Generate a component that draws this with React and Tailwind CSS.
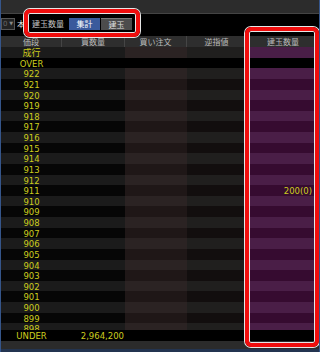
import React from "react";

const cjk = "font-['Noto_Sans_CJK_JP',sans-serif]";
const num = "font-['DejaVu_Sans',sans-serif]";

const prices = Array.from({ length: 25 }, (_, i) => String(922 - i));

const bands = {
    light: ["bg-[#1b1b1b]", "bg-[#1b1b1b]", "bg-[#2b2323]", "bg-[#201f1e]", "bg-[#4a1e47]"],
    dark: ["bg-[#060606]", "bg-[#060606]", "bg-[#1f1717]", "bg-[#120e0e]", "bg-[#360b30]"],
    black: ["bg-black", "bg-black", "bg-black", "bg-black", "bg-black"],
};

const rows = [
    { price: "成行", band: "light", jp: true },
    { price: "OVER", band: "black" },
    ...prices.map((p, i) => ({
        price: p,
        band: i % 2 === 0 ? "light" : "dark",
        pos: p === "911" ? "200(0)" : "",
    })),
];

const cols = "grid grid-cols-[61px_63px_62px_60px_72px]";

function Row({ price, band, jp, qty, pos }) {
    const bg = bands[band];
    return (
        <div className={`${cols} h-[10.64px] shrink-0 text-[#cdcd1e] leading-[12px]`}>
            <div className={`${bg[0]} text-center ${jp ? `${cjk} text-[9px]` : `${num} text-[8.5px]`}`}>
                {price}
            </div>
            <div className={`${bg[1]} ${num} text-[8.5px] text-right pr-[1px]`}>{qty}</div>
            <div className={bg[2]} />
            <div className={bg[3]} />
            <div className={`${bg[4]} ${num} text-[8.5px] text-right pr-[7px]`}>{pos}</div>
        </div>
    );
}

export default function App() {
    return (
        <div className="relative w-[320px] h-[352px] bg-black overflow-hidden border-x border-[#35558a] flex flex-col">
            {/* barre du haut */}
            <div className="h-[14px] shrink-0 bg-[#2c2c2c] border-b border-[#444]" />

            {/* ligne de contrôles */}
            <div className="h-[22px] shrink-0 flex items-start pt-[4px]">
                <div className="w-[14px] h-[12px] bg-[#222] border border-[#555] flex items-center text-[7px] text-[#666] font-['DejaVu_Sans',sans-serif]">
                    <span className="pl-[1px]">0</span>
                    <span className="ml-auto pr-[1px] text-[5px] text-[#888]">▼</span>
                </div>
                <span className={`${cjk} ml-[2px] text-[8px] leading-[12px] text-[#ddd]`}>本</span>
                <span className={`${cjk} ml-[7px] text-[8px] leading-[12px] text-[#c4c4c4]`}>建玉数量</span>
                <button className={`${cjk} ml-[5px] w-[31px] h-[12px] bg-[#3a5a9c] text-[8px] leading-[12px] text-white`}>
                    集計
                </button>
                <button className={`${cjk} ml-[1px] w-[31px] h-[12px] bg-[#4c4c4c] border-t border-[#777] text-[8px] leading-[11px] text-[#ddd]`}>
                    建玉
                </button>
            </div>

            {/* en-tête */}
            <div className={`${cols} h-[11px] shrink-0 bg-[#2e2e2e] ${cjk} text-[8px] leading-[11px] text-[#bababa]`}>
                <div className="text-center border-r border-[#454545]">価段</div>
                <div className="text-center border-r border-[#454545]">買数量</div>
                <div className="text-center border-r border-[#454545]">買い注文</div>
                <div className="text-center border-r border-[#454545]">逆指値</div>
                <div className="text-center">建玉数量</div>
            </div>

            {/* lignes */}
            <div className="h-[283px] shrink-0 overflow-hidden flex flex-col">
                {rows.map((r) => (
                    <Row key={r.price} {...r} />
                ))}
            </div>

            <div className="h-[11px] shrink-0 flex flex-col overflow-hidden">
                <Row price="UNDER" band="black" qty="2,964,200" />
            </div>

            {/* pied */}
            <div className="h-[8px] shrink-0 bg-[#2b2b2b]" />
            <div className="h-[3px] shrink-0 bg-[#233450]" />

            {/* cadres rouges */}
            <div className="absolute left-[23px] top-[9px] w-[116px] h-[28px] rounded-[6px] border-[4px] border-[#f00d0d] shadow-[0_0_0_1px_#e6e6e6,inset_0_0_0_1px_#e6e6e6]" />
            <div className="absolute left-[244px] top-[27px] w-[74px] h-[320px] rounded-[6px] border-[4px] border-[#f00d0d] shadow-[0_0_0_1px_#e6e6e6,inset_0_0_0_1px_#e6e6e6]" />
        </div>
    );
}
